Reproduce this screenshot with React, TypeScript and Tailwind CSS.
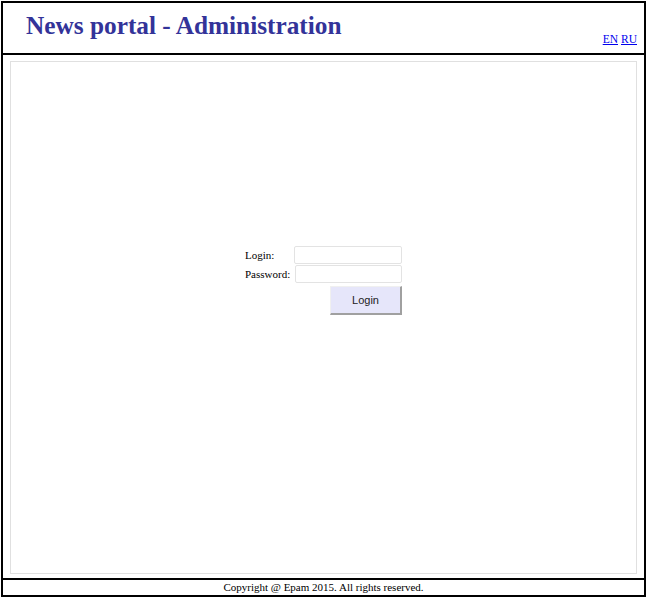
export default function App() {
  return (
    <div className="w-[647px] h-[598px] bg-white p-px font-['Liberation_Serif',serif] text-[11px] text-black">
      <div className="flex h-[596px] w-[645px] flex-col border-2 border-black">
        {/* Header */}
        <div className="flex h-[52px] shrink-0 items-start justify-between border-b-2 border-black">
          <h1 className="ml-[23px] mt-[10px] text-[25.3px] font-bold leading-none text-[#333399]">
            News portal - Administration
          </h1>
          <div className="mr-[7px] mt-[31px] flex gap-[3px] text-[11.5px] leading-none">
            <a href="#" className="text-[#0000ee] underline">EN</a>
            <a href="#" className="text-[#0000ee] underline">RU</a>
          </div>
        </div>

        {/* Body */}
        <div className="flex flex-1 px-[7px] pt-[6px] pb-[4px]">
          <div className="flex flex-1 flex-col items-center border border-[#e0e0e0] pt-[184px]">
            <form className="flex w-[157px] flex-col" onSubmit={(e) => e.preventDefault()}>
              <div className="flex h-[18px] items-center">
                <label className="w-[49px] shrink-0">Login:</label>
                <input className="block h-[18px] w-[108px] rounded-[2px] border border-[#e3e3e3] bg-white outline-none" />
              </div>
              <div className="mt-px flex h-[18px] items-center">
                <label className="w-[50px] shrink-0">Password:</label>
                <input type="password" className="block h-[18px] w-[107px] rounded-[2px] border border-[#e3e3e3] bg-white outline-none" />
              </div>
              <div className="mt-[3px] flex justify-end">
                <button className="h-[29px] w-[72px] border border-b-2 border-r-2 border-b-[#a0a0a0] border-l-[#f0f0f0] border-r-[#a0a0a0] border-t-[#f0f0f0] bg-[#e6e6fa] font-['Liberation_Sans',sans-serif] text-[11px] text-[#222]">
                  Login
                </button>
              </div>
            </form>
          </div>
        </div>

        {/* Footer */}
        <div className="flex h-[17px] shrink-0 items-center justify-center border-t-2 border-black leading-none">
          Copyright @ Epam 2015. All rights reserved.
        </div>
      </div>
    </div>
  );
}
